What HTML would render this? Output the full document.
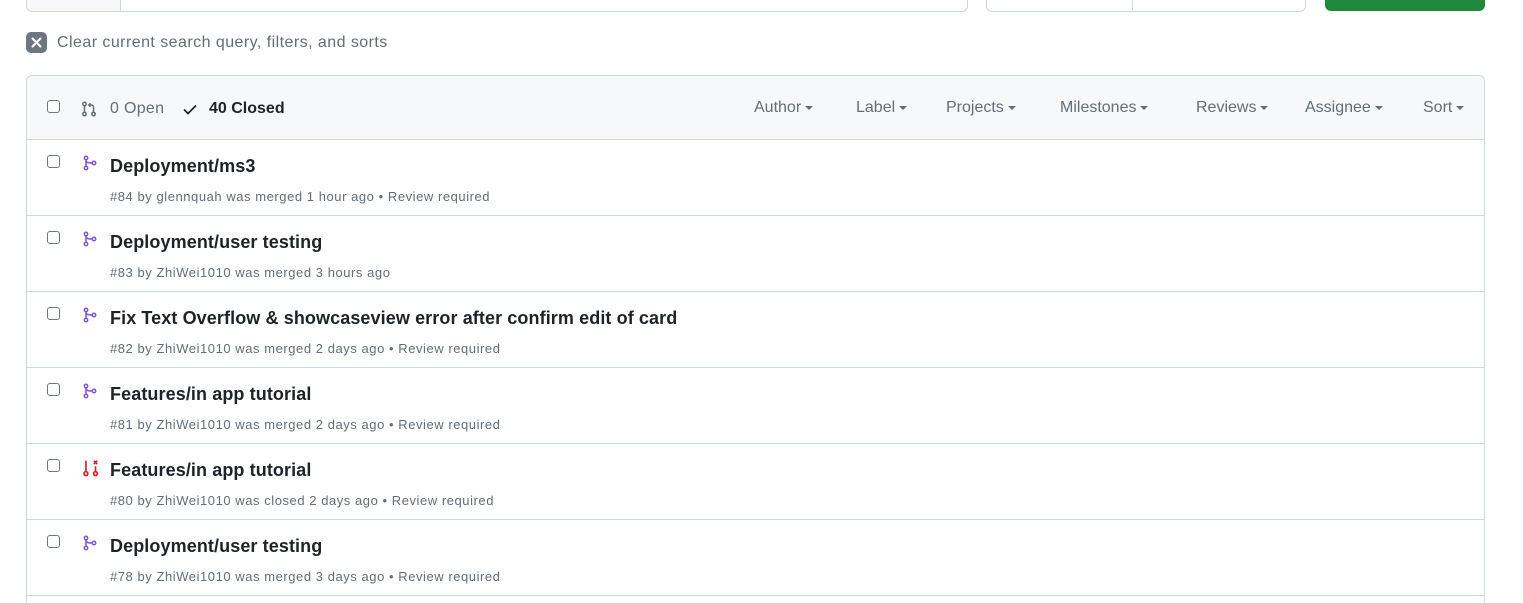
<!DOCTYPE html>
<html style="overflow:hidden;height:603px"><head><style>
body{margin:0;width:1523px;height:603px;overflow:hidden;background:#fff;font-family:"Liberation Sans",sans-serif;color:#1f2328;position:relative}
.abs{position:absolute}
.box{left:26px;top:75px;width:1457px;height:527px;border:1px solid #d0d7de;border-bottom:0;border-radius:6px 6px 0 0;overflow:hidden}
.hdr{height:63px;background:#f6f8fa;border-bottom:1px solid #d0d7de;border-radius:6px 6px 0 0;position:relative}
.cb{position:absolute;width:11px;height:11px;border:1px solid #6e7781;border-radius:3px;background:#fff}
.row{position:relative;height:75px;border-bottom:1px solid #d0d7de}
.t{position:absolute;left:83px;top:16px;font-size:18px;font-weight:bold;color:#1f2328;letter-spacing:0.1px}
.s{position:absolute;left:83px;top:49px;font-size:13px;color:#656d76;letter-spacing:0.55px}
.f{position:absolute;top:23px;font-size:16px;color:#656d76}
.f:after{content:"";display:inline-block;margin-left:4px;vertical-align:middle;border:4px solid transparent;border-top-color:#656d76;border-bottom:0}
.ic{position:absolute;left:55px;top:15px}
</style></head><body>
<div class="abs" style="left:26px;top:-10px;width:940px;height:20px;border:1px solid #d0d7de;border-radius:6px;background:#f6f8fa"></div>
<div class="abs" style="left:120px;top:-10px;width:846px;height:20px;border:1px solid #d0d7de;border-radius:0 6px 6px 0;background:#fff"></div>
<div class="abs" style="left:986px;top:-10px;width:318px;height:20px;border:1px solid #d0d7de;border-radius:6px;background:#fff"></div>
<div class="abs" style="left:1132px;top:-10px;width:1px;height:20px;background:#d0d7de"></div>
<div class="abs" style="left:1325px;top:-10px;width:160px;height:21px;border-radius:6px;background:#1f883d"></div>
<div class="abs" style="left:26px;top:32px;width:21px;height:21px;border-radius:5px;background:#6e7781"><svg width="21" height="21"><path d="M6.5 6.5l8 8M14.5 6.5l-8 8" stroke="#fff" stroke-width="2" stroke-linecap="round"/></svg></div>
<div class="abs" style="left:57px;top:34px;font-size:16px;color:#656d76;letter-spacing:0.45px">Clear current search query, filters, and sorts</div>
<div class="abs box">
<div class="hdr">
<div class="cb" style="left:20px;top:24px"></div>
<svg class="abs" style="left:54px;top:24px" width="16" height="18" viewBox="0 0 16 16" fill="none" stroke="#656d76" stroke-width="1.5"><circle cx="3.5" cy="3" r="1.7"/><circle cx="3.5" cy="13" r="1.7"/><path d="M3.5 4.7v6.6"/><circle cx="12.5" cy="13" r="1.7"/><path d="M12.5 11.3V6a2 2 0 0 0-2-2H8M9.5 2.3L7.8 4l1.7 1.7"/></svg>
<div class="abs" style="left:83px;top:24px;font-size:16px;color:#656d76;letter-spacing:0.3px">0 Open</div>
<svg class="abs" style="left:155px;top:25px" width="16" height="16"><path d="M2 8.5l4 4 8-8" stroke="#1f2328" stroke-width="1.7" fill="none"/></svg>
<div class="abs" style="left:182px;top:24px;font-size:16px;font-weight:bold">40 Closed</div>
<div class="f" style="left:727px">Author</div>
<div class="f" style="left:829px">Label</div>
<div class="f" style="left:919px">Projects</div>
<div class="f" style="left:1033px">Milestones</div>
<div class="f" style="left:1169px">Reviews</div>
<div class="f" style="left:1278px">Assignee</div>
<div class="f" style="left:1396px">Sort</div>
</div>
<div class="row"><div class="cb" style="left:20px;top:15px"></div><svg class="ic" width="16" height="16" viewBox="0 0 16 16" fill="none" stroke="#8250df" stroke-width="1.5"><circle cx="4" cy="3" r="1.7"/><circle cx="4" cy="13" r="1.7"/><circle cx="12" cy="8" r="1.7"/><path d="M4 4.7v6.6M4 5c0 3 3 3 6.3 3"/></svg><div class="t">Deployment/ms3</div><div class="s">#84 by glennquah was merged 1 hour ago • Review required</div></div>
<div class="row"><div class="cb" style="left:20px;top:15px"></div><svg class="ic" width="16" height="16" viewBox="0 0 16 16" fill="none" stroke="#8250df" stroke-width="1.5"><circle cx="4" cy="3" r="1.7"/><circle cx="4" cy="13" r="1.7"/><circle cx="12" cy="8" r="1.7"/><path d="M4 4.7v6.6M4 5c0 3 3 3 6.3 3"/></svg><div class="t">Deployment/user testing</div><div class="s">#83 by ZhiWei1010 was merged 3 hours ago</div></div>
<div class="row"><div class="cb" style="left:20px;top:15px"></div><svg class="ic" width="16" height="16" viewBox="0 0 16 16" fill="none" stroke="#8250df" stroke-width="1.5"><circle cx="4" cy="3" r="1.7"/><circle cx="4" cy="13" r="1.7"/><circle cx="12" cy="8" r="1.7"/><path d="M4 4.7v6.6M4 5c0 3 3 3 6.3 3"/></svg><div class="t">Fix Text Overflow &amp; showcaseview error after confirm edit of card</div><div class="s">#82 by ZhiWei1010 was merged 2 days ago • Review required</div></div>
<div class="row"><div class="cb" style="left:20px;top:15px"></div><svg class="ic" width="16" height="16" viewBox="0 0 16 16" fill="none" stroke="#8250df" stroke-width="1.5"><circle cx="4" cy="3" r="1.7"/><circle cx="4" cy="13" r="1.7"/><circle cx="12" cy="8" r="1.7"/><path d="M4 4.7v6.6M4 5c0 3 3 3 6.3 3"/></svg><div class="t">Features/in app tutorial</div><div class="s">#81 by ZhiWei1010 was merged 2 days ago • Review required</div></div>
<div class="row"><div class="cb" style="left:20px;top:15px"></div><svg class="ic" width="18" height="18" viewBox="0 0 16 16" fill="none" stroke="#cf222e" stroke-width="1.5"><circle cx="3.5" cy="13" r="1.7"/><path d="M3.5 1.5v9.8"/><circle cx="12" cy="13" r="1.7"/><path d="M12 6.5v4.8M10.5 1.5l3 3M13.5 1.5l-3 3"/></svg><div class="t">Features/in app tutorial</div><div class="s">#80 by ZhiWei1010 was closed 2 days ago • Review required</div></div>
<div class="row"><div class="cb" style="left:20px;top:15px"></div><svg class="ic" width="16" height="16" viewBox="0 0 16 16" fill="none" stroke="#8250df" stroke-width="1.5"><circle cx="4" cy="3" r="1.7"/><circle cx="4" cy="13" r="1.7"/><circle cx="12" cy="8" r="1.7"/><path d="M4 4.7v6.6M4 5c0 3 3 3 6.3 3"/></svg><div class="t">Deployment/user testing</div><div class="s">#78 by ZhiWei1010 was merged 3 days ago • Review required</div></div>
</div>
</body></html>
